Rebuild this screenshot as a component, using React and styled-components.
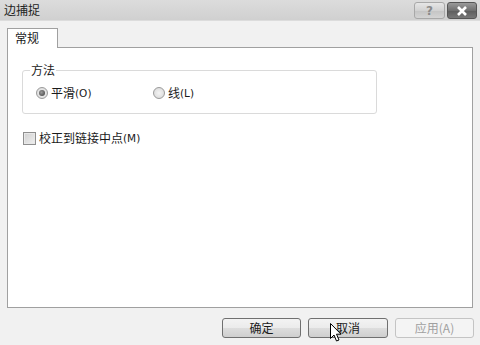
import React from 'react'
import styled, { createGlobalStyle } from 'styled-components'

const Global = createGlobalStyle`
  html, body {
    margin: 0;
    padding: 0;
    background: #f0f0f0;
  }
  body {
    font-family: "Noto Sans CJK SC", "DejaVu Sans", sans-serif;
    font-size: 12px;
    color: #1a1a1a;
  }
`

const Window = styled.div`
  width: 480px;
  height: 345px;
  display: flex;
  flex-direction: column;
  background: #f1f1f1;
  position: relative;
  overflow: hidden;
`

const TitleBar = styled.div`
  height: 21px;
  display: flex;
  align-items: center;
  justify-content: space-between;
  padding: 0 3px 0 4px;
  background: linear-gradient(#dcdcdc, #d0d0d0);
  border-bottom: 1px solid #dcdcdc;
  box-sizing: border-box;
`

const Title = styled.span`
  font-size: 12px;
  color: #222;
  line-height: 1;
  margin-top: -1px;
`

const TitleButtons = styled.div`
  display: flex;
  gap: 2px;
  align-self: flex-start;
  margin-top: 2px;
`

const CapButton = styled.div`
  width: ${p => (p.$close ? 30 : 31)}px;
  height: 17px;
  box-sizing: border-box;
  border: 1px solid ${p => (p.$close ? '#555' : '#a8a8a8')};
  border-radius: 3px;
  background: ${p =>
    p.$close
      ? 'linear-gradient(#9a9a9a, #6f6f6f 50%, #5c5c5c 51%, #777)'
      : 'linear-gradient(#e6e6e6, #d2d2d2 50%, #c4c4c4 51%, #d4d4d4)'};
  display: flex;
  align-items: center;
  justify-content: center;
  color: ${p => (p.$close ? '#fff' : '#8a8a8a')};
  font-family: "DejaVu Sans", sans-serif;
  font-weight: bold;
  font-size: 12px;
`

const Body = styled.div`
  flex: 1;
  display: flex;
  flex-direction: column;
  padding: 7px 0 0 7px;
`

const TabStrip = styled.div`
  display: flex;
  height: 19px;
  position: relative;
  z-index: 1;
`

const Tab = styled.div`
  width: 51px;
  height: 20px;
  box-sizing: border-box;
  border: 1px solid #a0a0a0;
  border-bottom: none;
  background: #fff;
  padding: 1px 0 0 7px;
  font-size: 12px;
  line-height: 16px;
`

const Panel = styled.div`
  height: 261px;
  width: 466px;
  box-sizing: border-box;
  border: 1px solid #a0a0a0;
  background: #fff;
  padding: 15px 0 0 14px;
  display: flex;
  flex-direction: column;
`

const Group = styled.fieldset`
  margin: 0;
  width: 355px;
  height: 51px;
  box-sizing: border-box;
  border: 1px solid #dadada;
  border-radius: 3px;
  padding: 9px 0 0 13px;
  min-width: 0;
`

const Legend = styled.legend`
  padding: 0 1px;
  margin-left: -6px;
  font-size: 12px;
  line-height: 14px;
`

const RadioRow = styled.div`
  display: flex;
  align-items: center;
`

const Option = styled.label`
  display: flex;
  align-items: center;
  width: ${p => p.$w}px;
  font-size: 12px;
  line-height: 14px;
`

const Mnemonic = styled.span`
  font-family: "DejaVu Sans", sans-serif;
  font-size: 10.5px;
`

const RadioDot = styled.span`
  width: 12px;
  height: 12px;
  box-sizing: border-box;
  border-radius: 50%;
  border: 1px solid #9a9a9a;
  background: radial-gradient(circle, #f4f4f4, #d6d6d6);
  margin-right: 3px;
  display: flex;
  align-items: center;
  justify-content: center;
  &::after {
    content: '';
    display: ${p => (p.$on ? 'block' : 'none')};
    width: 6px;
    height: 6px;
    border-radius: 50%;
    background: radial-gradient(circle at 40% 40%, #9a9a9a, #3a3a3a);
  }
`

const CheckRow = styled.label`
  display: flex;
  align-items: center;
  margin-top: 17px;
  margin-left: 1px;
  font-size: 12px;
  line-height: 14px;
`

const Box = styled.span`
  width: 13px;
  height: 13px;
  box-sizing: border-box;
  border: 1px solid #8f8f8f;
  background: linear-gradient(135deg, #d0d0d0, #f0f0f0);
  box-shadow: inset 0 0 0 1px #e8e8e8;
  margin-right: 3px;
`

const Footer = styled.div`
  display: flex;
  justify-content: flex-end;
  gap: 7px;
  padding: 10px 6px 0 0;
`

const Button = styled.div`
  width: ${p => p.$w}px;
  height: 20px;
  box-sizing: border-box;
  border: 1px solid ${p => (p.$disabled ? '#c4c4c4' : '#707070')};
  border-radius: 3px;
  background: ${p =>
    p.$disabled
      ? '#f4f4f4'
      : 'linear-gradient(#f3f3f3, #ebebeb 50%, #dddddd 51%, #cfcfcf)'};
  color: ${p => (p.$disabled ? '#a0a0a0' : '#1a1a1a')};
  display: flex;
  align-items: center;
  justify-content: center;
  font-size: 12px;
  line-height: 1;
`

const Cursor = styled.svg`
  position: absolute;
  left: 330px;
  top: 323px;
`

export default function App() {
  return (
    <>
      <Global />
      <Window>
        <TitleBar>
          <Title>边捕捉</Title>
          <TitleButtons>
            <CapButton>?</CapButton>
            <CapButton $close>
              <svg width="12" height="10" viewBox="0 0 12 10">
                <path d="M2 1 L10 9 M10 1 L2 9" stroke="#fff" strokeWidth="2.6" />
              </svg>
            </CapButton>
          </TitleButtons>
        </TitleBar>
        <Body>
          <TabStrip>
            <Tab>常规</Tab>
          </TabStrip>
          <Panel>
            <Group>
              <Legend>方法</Legend>
              <RadioRow>
                <Option $w={117}>
                  <RadioDot $on />
                  平滑<Mnemonic>(O)</Mnemonic>
                </Option>
                <Option $w={80}>
                  <RadioDot />
                  线<Mnemonic>(L)</Mnemonic>
                </Option>
              </RadioRow>
            </Group>
            <CheckRow>
              <Box />
              校正到链接中点<Mnemonic>(M)</Mnemonic>
            </CheckRow>
          </Panel>
          <Footer>
            <Button $w={79}>确定</Button>
            <Button $w={80}>取消</Button>
            <Button $w={79} $disabled>应用(A)</Button>
          </Footer>
        </Body>
        <Cursor width="12" height="19" viewBox="0 0 12 19">
          <path
            d="M0.5 0.5 L0.5 15.5 L4 12 L6.5 18 L9 17 L6.5 11.2 L11 11.2 Z"
            fill="#fff"
            stroke="#000"
            strokeWidth="1"
          />
        </Cursor>
      </Window>
    </>
  )
}
